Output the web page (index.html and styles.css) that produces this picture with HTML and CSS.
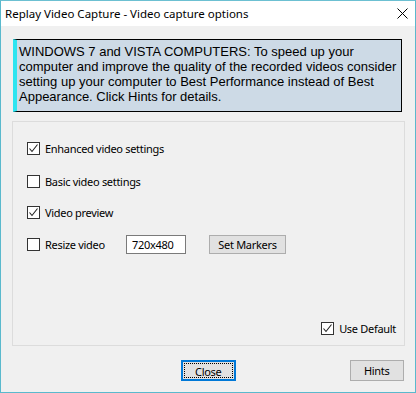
FILE: index.html
```html
<!DOCTYPE html>
<html lang="en">
<head>
    <meta charset="UTF-8">
    <title>Replay Video Capture - Video capture options</title>
    <link rel="stylesheet" href="styles.css">
</head>
<body>
    <div class="window">
        <div class="titlebar">
            <span class="title">Replay Video Capture - Video capture options</span>
            <svg class="x" width="11" height="11" viewBox="0 0 11 11"><path d="M0.5 0.5L10.5 10.5M10.5 0.5L0.5 10.5" stroke="#000" stroke-width="1" fill="none"/></svg>
        </div>
        <div class="content">
            <div class="info">
                <p>WINDOWS 7 and VISTA COMPUTERS: To speed up your<br>computer and improve the quality of the recorded videos consider<br>setting up your computer to Best Performance instead of Best<br>Appearance. Click Hints for details.</p>
            </div>
            <div class="group">
                <label class="row">
                    <span class="check on"><svg width="11" height="11" viewBox="0 0 11 11"><path d="M1.5 5.5L4 8.5L9.5 1.5" stroke="#222" stroke-width="1.1" fill="none"/></svg></span>
                    Enhanced video settings
                </label>
                <label class="row">
                    <span class="check"></span>
                    Basic video settings
                </label>
                <label class="row">
                    <span class="check on"><svg width="11" height="11" viewBox="0 0 11 11"><path d="M1.5 5.5L4 8.5L9.5 1.5" stroke="#222" stroke-width="1.1" fill="none"/></svg></span>
                    Video preview
                </label>
                <div class="row">
                    <span class="check"></span>
                    <span class="lbl">Resize video</span>
                    <span class="field">720x480</span>
                    <button class="btn markers">Set Markers</button>
                </div>
                <label class="row def">
                    <span class="check on"><svg width="11" height="11" viewBox="0 0 11 11"><path d="M1.5 5.5L4 8.5L9.5 1.5" stroke="#222" stroke-width="1.1" fill="none"/></svg></span>
                    Use Default
                </label>
            </div>
            <div class="buttons">
                <button class="btn close"><span>Close</span></button>
                <button class="btn hints">Hints</button>
            </div>
        </div>
    </div>
</body>
</html>
```

FILE: styles.css
```css
html, body{ margin:0; padding:0; }
body{ font-family:"Noto Sans", sans-serif; font-size:11px; letter-spacing:-0.3px; color:#000; background:#f0f0f0; }
p{ margin:0; }
button{ font:inherit; letter-spacing:inherit; color:#000; margin:0; padding:0; }

.window{
    width:416px; height:393px; box-sizing:border-box;
    border:1px solid #5ab9cd; border-top-color:#6cc0d2;
    background:#f0f0f0; display:flex; flex-direction:column;
}
.titlebar{
    height:25px; background:#fff; display:flex; align-items:center;
    padding:0 7px 0 4px; justify-content:space-between;
}
.title{ font-size:11.5px; letter-spacing:0; }
.x{ display:block; }

.content{ flex:1; padding:13px 11px 0 11px; display:flex; flex-direction:column; }

.info{
    margin-left:1px; width:389px; height:73px; box-sizing:border-box;
    border:1px solid #000; border-left:4px solid #2ee5f0;
    background:#cddae6; padding:4px 0 0 2px;
}
.info p{ font-family:"Liberation Sans", Arial, sans-serif; font-size:13px; line-height:15px; letter-spacing:0; white-space:nowrap; }

.group{
    margin-top:9px; width:393px; height:225px; box-sizing:border-box;
    border:1px solid #dcdcdc; padding:19px 0 0 14px;
    display:flex; flex-direction:column;
}
.row{ display:flex; align-items:center; height:15px; margin-bottom:18px; }
.row:nth-child(2){ margin-bottom:16px; }
.row:nth-child(3){ margin-bottom:17px; }
.check{
    width:13px; height:13px; box-sizing:border-box; border:1px solid #333;
    background:#fff; margin-right:5px; display:flex; align-items:center; justify-content:center;
}
.check svg{ display:block; }
.lbl{ width:81px; }
.field{
    width:60px; height:19px; box-sizing:border-box; border:1px solid #7a7a7a;
    background:#fff; padding:0 0 0 5px; line-height:17px; margin-right:23px;
}
.btn{
    background:#e1e1e1; border:1px solid #adadad; box-sizing:border-box;
}
.markers{ width:77px; height:19px; }
.def{ margin-top:auto; margin-bottom:9px; align-self:flex-end; margin-right:8px; }

.buttons{ display:flex; margin-top:14px; align-items:flex-start; }
.close{
    margin-left:169px; width:55px; height:21px; border:2px solid #0078d7;
    padding:1px;
}
.close span{
    display:block; height:100%; box-sizing:border-box; border:1px dotted #000;
    line-height:15px;
}
.hints{ margin-left:114px; width:55px; height:21px; }
```
